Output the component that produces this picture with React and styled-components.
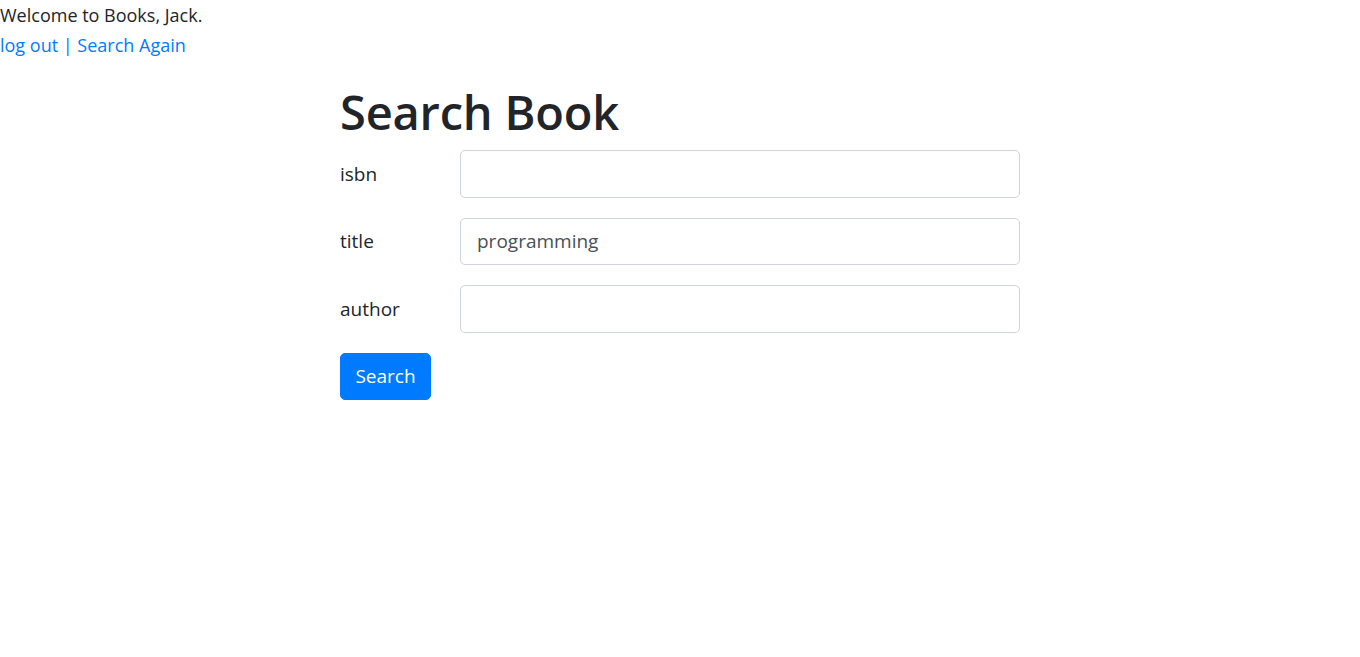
import React from 'react'
import styled, { createGlobalStyle } from 'styled-components'

const GlobalStyle = createGlobalStyle`
    html, body {
        margin: 0;
        padding: 0;
        background: #fff;
    }
    body {
        font-family: "Open Sans", "Noto Sans", sans-serif;
        font-size: 18px;
        line-height: 1.5;
        color: #212529;
    }
`

const Header = styled.div`
    display: flex;
    flex-direction: column;
    gap: 3px;
    padding-top: 2px;
`
const Welcome = styled.div`
    line-height: 27px;
`
const Links = styled.div`
    line-height: 27px;
    color: #007bff;
    & > a {
        color: #007bff;
        text-decoration: none;
    }
`
const Container = styled.div`
    width: 680px;
    margin: 26px auto 0;
`
const Title = styled.h1`
    margin: 0 0 10px;
    font-size: 47px;
    font-weight: 600;
    line-height: 55px;
    letter-spacing: -0.2px;
`
const Form = styled.form`
    display: flex;
    flex-direction: column;
    gap: 20px;
`
const Row = styled.div`
    display: grid;
    grid-template-columns: 120px 1fr;
    align-items: center;
`
const Label = styled.label`
    font-size: 19px;
    line-height: 28px;
`
const Input = styled.input`
    box-sizing: border-box;
    height: 47.5px;
    width: 100%;
    padding: 8px 16px;
    font-family: inherit;
    font-size: 19px;
    color: #495057;
    border: 1px solid #ced4da;
    border-radius: 5px;
    background: #fff;
    outline: none;
`
const Button = styled.button`
    align-self: flex-start;
    height: 47px;
    width: 91px;
    padding: 0;
    font-family: inherit;
    font-size: 19px;
    color: #fff;
    background: #007bff;
    border: 1px solid #007bff;
    border-radius: 5px;
    cursor: pointer;
`

const fields = [
    { name: 'isbn', value: '' },
    { name: 'title', value: 'programming' },
    { name: 'author', value: '' },
]

const App = () => {
    return (
        <>
            <GlobalStyle />
            <Header>
                <Welcome>Welcome to Books, Jack.</Welcome>
                <Links>
                    <a href="#">log out</a> | <a href="#">Search Again</a>
                </Links>
            </Header>
            <Container>
                <Title>Search Book</Title>
                <Form onSubmit={e => e.preventDefault()}>
                    {fields.map(f => (
                        <Row key={f.name}>
                            <Label htmlFor={f.name}>{f.name}</Label>
                            <Input id={f.name} defaultValue={f.value} />
                        </Row>
                    ))}
                    <Button type="submit">Search</Button>
                </Form>
            </Container>
        </>
    )
}

export default App
